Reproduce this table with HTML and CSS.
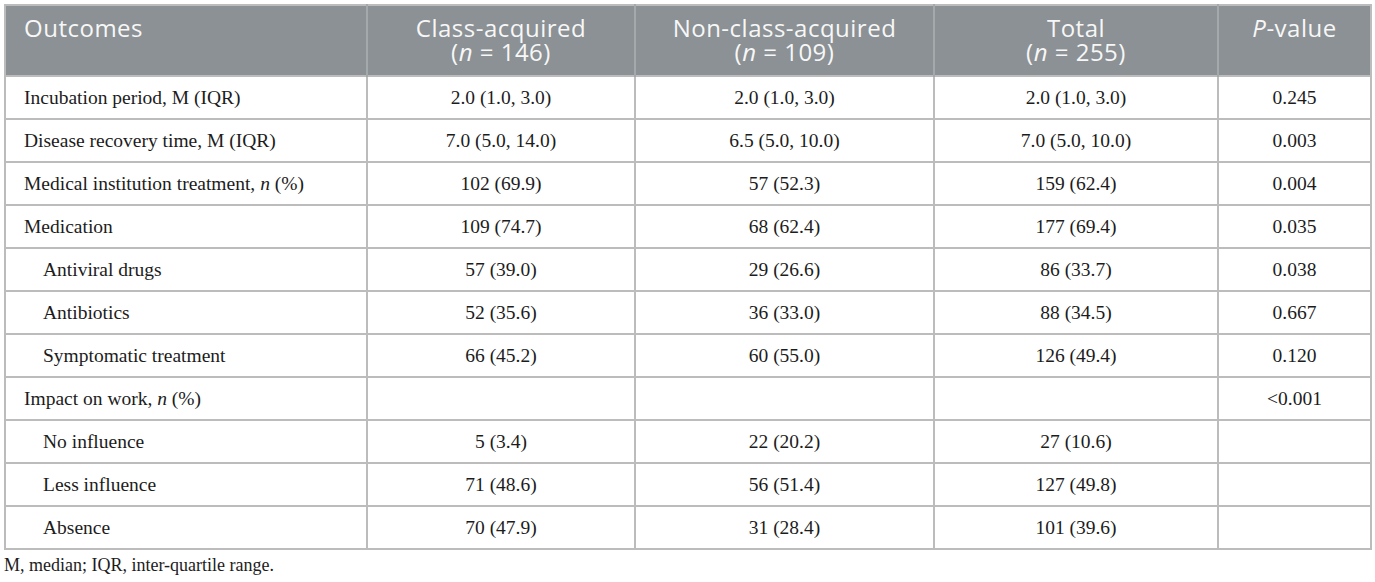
FILE: index.html
```html
<!DOCTYPE html>
<html lang="en">
<head>
<meta charset="utf-8">
<link rel="stylesheet" href="styles.css">
</head>
<body>
<table class="data">
  <colgroup>
    <col class="c1"><col class="c2"><col class="c3"><col class="c4"><col class="c5">
  </colgroup>
  <thead>
    <tr>
      <th class="left">Outcomes</th>
      <th><span class="ln">Class-acquired</span><span class="ln">(<i>n</i> = 146)</span></th>
      <th><span class="ln">Non-class-acquired</span><span class="ln">(<i>n</i> = 109)</span></th>
      <th><span class="ln">Total</span><span class="ln">(<i>n</i> = 255)</span></th>
      <th><i>P</i>-value</th>
    </tr>
  </thead>
  <tbody>
    <tr><td class="left">Incubation period, M (IQR)</td><td>2.0 (1.0, 3.0)</td><td>2.0 (1.0, 3.0)</td><td>2.0 (1.0, 3.0)</td><td>0.245</td></tr>
    <tr><td class="left">Disease recovery time, M (IQR)</td><td>7.0 (5.0, 14.0)</td><td>6.5 (5.0, 10.0)</td><td>7.0 (5.0, 10.0)</td><td>0.003</td></tr>
    <tr><td class="left">Medical institution treatment, <i>n</i> (%)</td><td>102 (69.9)</td><td>57 (52.3)</td><td>159 (62.4)</td><td>0.004</td></tr>
    <tr><td class="left">Medication</td><td>109 (74.7)</td><td>68 (62.4)</td><td>177 (69.4)</td><td>0.035</td></tr>
    <tr><td class="left sub">Antiviral drugs</td><td>57 (39.0)</td><td>29 (26.6)</td><td>86 (33.7)</td><td>0.038</td></tr>
    <tr><td class="left sub">Antibiotics</td><td>52 (35.6)</td><td>36 (33.0)</td><td>88 (34.5)</td><td>0.667</td></tr>
    <tr><td class="left sub">Symptomatic treatment</td><td>66 (45.2)</td><td>60 (55.0)</td><td>126 (49.4)</td><td>0.120</td></tr>
    <tr><td class="left">Impact on work, <i>n</i> (%)</td><td></td><td></td><td></td><td>&lt;0.001</td></tr>
    <tr><td class="left sub">No influence</td><td>5 (3.4)</td><td>22 (20.2)</td><td>27 (10.6)</td><td></td></tr>
    <tr><td class="left sub">Less influence</td><td>71 (48.6)</td><td>56 (51.4)</td><td>127 (49.8)</td><td></td></tr>
    <tr><td class="left sub">Absence</td><td>70 (47.9)</td><td>31 (28.4)</td><td>101 (39.6)</td><td></td></tr>
  </tbody>
</table>
<p class="note">M, median; IQR, inter-quartile range.</p>
</body>
</html>
```

FILE: styles.css
```css
html, body {
  margin: 0;
  background: #ffffff;
}
body {
  padding: 4px;
  font-family: "Liberation Serif", "Times New Roman", serif;
  color: #1c1c1c;
}
.data {
  border-collapse: collapse;
  width: 1366px;
  table-layout: fixed;
  border: 2px solid #bcbcbc;
}
.c1 { width: 362px; }
.c2 { width: 268px; }
.c3 { width: 299px; }
.c4 { width: 284px; }
.c5 { width: 153px; }
.data thead th {
  background: #8b9194;
  color: #f7f7f7;
  font-family: "Open Sans", "DejaVu Sans", sans-serif;
  font-weight: 400;
  font-size: 24px;
  letter-spacing: 0.5px;
  line-height: 24px;
  height: 71px;
  box-sizing: border-box;
  padding: 10px 12px 8px;
  text-align: center;
  vertical-align: top;
  border-left: 2px solid #a4a9ac;
}
.data thead th:first-child { border-left: none; }
.data thead .ln { display: block; }
.data thead th.left {
  text-align: left;
  padding-left: 18px;
}
.data td {
  font-size: 19.5px;
  height: 41px;
  padding: 0 18px;
  text-align: center;
  vertical-align: middle;
  border: 2px solid #bcbcbc;
}
.data td.left {
  text-align: left;
  padding-left: 18px;
}
.data td.sub {
  padding-left: 37px;
}
.note {
  margin: 5px 0 0;
  font-size: 18px;
  color: #1c1c1c;
}
```
